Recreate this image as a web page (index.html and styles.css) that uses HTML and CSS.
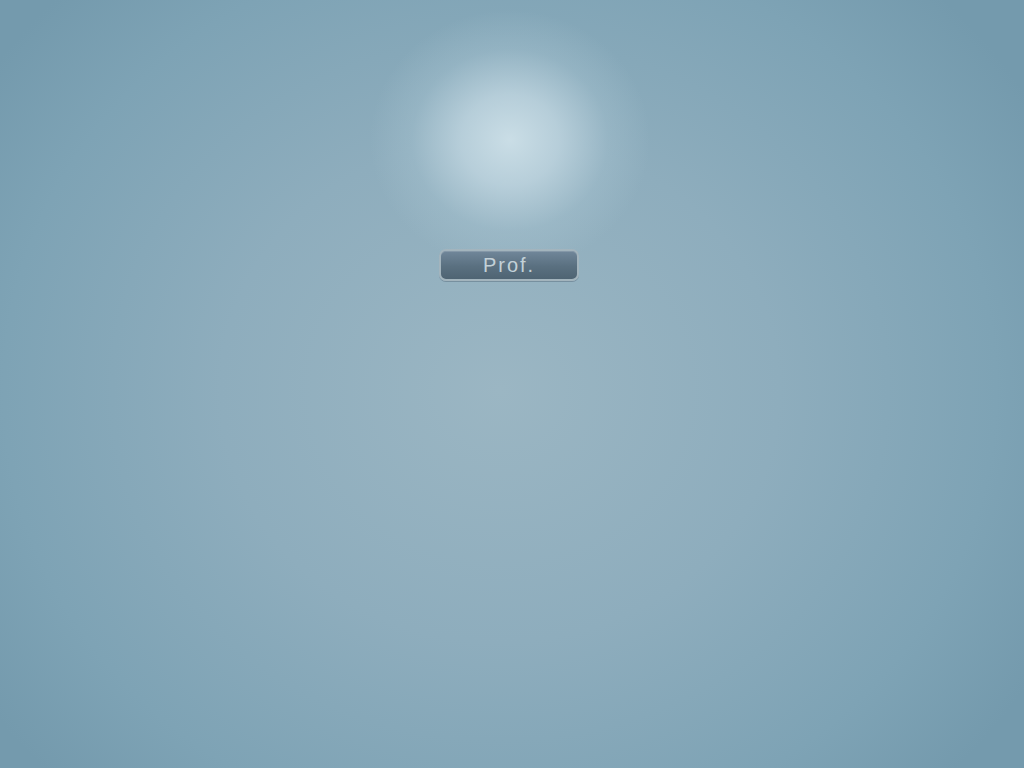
FILE: index.html
```html
<!DOCTYPE html>
<html>
<head>
<meta charset="utf-8">
<link rel="stylesheet" href="styles.css">
</head>
<body>
<div class="screen">
  <div class="glow"></div>
  <div class="center">
    <button class="btn">Prof.</button>
  </div>
</div>
</body>
</html>
```
FILE: styles.css
```css
html, body { margin: 0; padding: 0; }
body { width: 1024px; height: 768px; overflow: hidden; font-family: "Liberation Sans", sans-serif; }
.screen {
  position: relative;
  width: 1024px;
  height: 768px;
  background: radial-gradient(ellipse 620px 560px at 500px 390px, #9bb6c3 0%, #8eadbd 45%, #7ea3b5 80%, #749aad 100%);
}
.glow {
  position: absolute;
  left: 370px;
  top: 10px;
  width: 280px;
  height: 260px;
  background: radial-gradient(ellipse 50% 50% at 50% 50%, rgba(205,224,232,0.95) 0%, rgba(196,217,227,0.75) 35%, rgba(170,198,211,0.35) 70%, rgba(150,182,197,0) 100%);
}
.center {
  position: relative;
  display: flex;
  justify-content: center;
  padding-top: 249px;
  padding-right: 6px;
}
.btn {
  width: 140px;
  height: 32px;
  padding: 0;
  border: 2px solid #a3b4bd;
  border-radius: 7px;
  background: linear-gradient(#71879a, #5a7080 55%, #4f6473);
  box-shadow: 0 1px 0 rgba(90,110,125,0.5), inset 0 1px 0 rgba(255,255,255,0.15);
  color: #c3d1d8;
  font-family: "Liberation Sans", sans-serif;
  font-size: 20px;
  letter-spacing: 2px;
  line-height: 28px;
  text-align: center;
}
```
